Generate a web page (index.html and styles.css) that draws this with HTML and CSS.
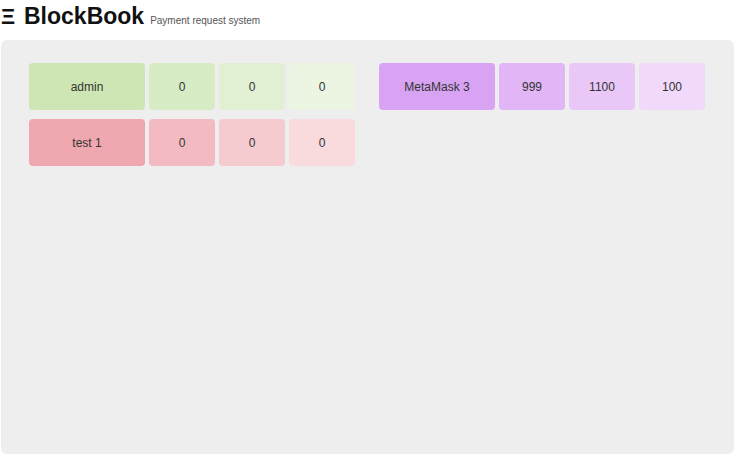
FILE: index.html
```html
<!DOCTYPE html>
<html>
<head>
<meta charset="utf-8">
<link rel="stylesheet" href="styles.css">
</head>
<body>
<header class="header">
  <span class="logo-mark">Ξ</span>
  <h1 class="title">BlockBook</h1>
  <span class="subtitle">Payment request system</span>
</header>
<main class="panel">
  <section class="group">
    <div class="row">
      <div class="cell name green-1">admin</div>
      <div class="cell green-2">0</div>
      <div class="cell green-3">0</div>
      <div class="cell green-4">0</div>
    </div>
    <div class="row">
      <div class="cell name pink-1">test 1</div>
      <div class="cell pink-2">0</div>
      <div class="cell pink-3">0</div>
      <div class="cell pink-4">0</div>
    </div>
  </section>
  <section class="group">
    <div class="row">
      <div class="cell name purple-1">MetaMask 3</div>
      <div class="cell purple-2">999</div>
      <div class="cell purple-3">1100</div>
      <div class="cell purple-4">100</div>
    </div>
  </section>
</main>
</body>
</html>
```
FILE: styles.css
```css
html, body {
  margin: 0;
  padding: 0;
  background: #ffffff;
  font-family: "Liberation Sans", Arial, Helvetica, sans-serif;
  color: #222;
}

.header {
  display: flex;
  align-items: baseline;
  height: 40px;
  padding-left: 1px;
  box-sizing: border-box;
  padding-top: 3px;
}

.logo-mark {
  font-size: 22px;
  font-weight: 700;
  width: 23px;
  color: #111;
}

.title {
  margin: 0;
  font-size: 23px;
  font-weight: 700;
  color: #111;
}

.subtitle {
  font-size: 10px;
  color: #555;
  margin-left: 6px;
}

.panel {
  margin: 0 1px;
  height: 414px;
  box-sizing: border-box;
  background: #eeeeee;
  border-radius: 6px;
  padding: 23px 28px;
  display: flex;
  align-items: flex-start;
  gap: 24px;
}

.group {
  display: flex;
  flex-direction: column;
  gap: 9px;
}

.row {
  display: flex;
  gap: 4px;
}

.cell {
  width: 66px;
  height: 47px;
  border-radius: 4px;
  display: flex;
  align-items: center;
  justify-content: center;
  font-size: 12px;
  color: #333;
}

.cell.name {
  width: 116px;
}

.green-1 { background: #cee6b4; }
.green-2 { background: #d7ebc4; }
.green-3 { background: #e1f0d3; }
.green-4 { background: #ebf5e2; }

.pink-1 { background: #f0a8b0; }
.pink-2 { background: #f3bbc1; }
.pink-3 { background: #f6cbcf; }
.pink-4 { background: #f9dbde; }

.purple-1 { background: #d9a3f3; }
.purple-2 { background: #e2b5f6; }
.purple-3 { background: #e9c8f8; }
.purple-4 { background: #f0d9fb; }
```
